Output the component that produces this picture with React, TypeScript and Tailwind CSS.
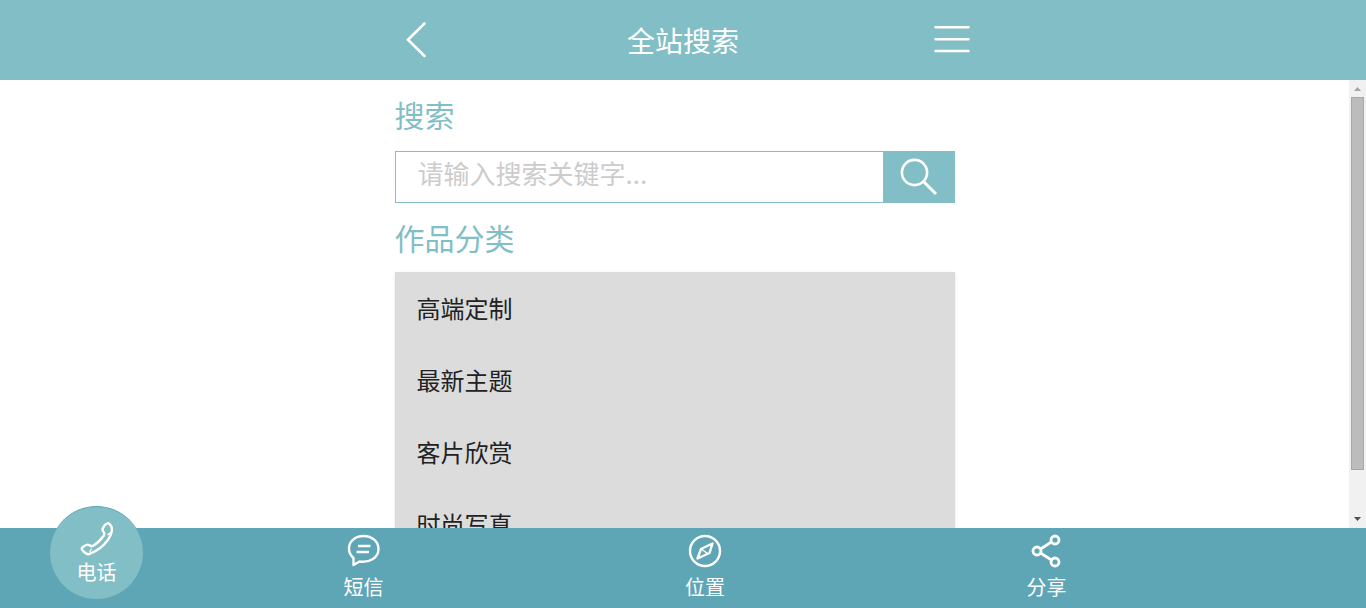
import { useState, type FormEvent } from "react";

const categories = ["高端定制", "最新主题", "客片欣赏", "时尚写真"];

function PhoneIcon() {
  return (
    <svg width="36" height="36" viewBox="0 0 36 36" fill="none" stroke="currentColor" strokeWidth="2.4" strokeLinejoin="round">
      <path d="M28 2.5 C29.500 1.800 31 3 32.500 6 C34 10 31.500 15 28.500 19.500 C24.500 25 17.500 30 11.500 32.500 C9 34 7.500 33 4.500 30.500 C2.500 28.500 2 27.500 4 26 C7 23.500 8.500 23 10 24 C11.500 25.300 12.500 25.500 14 24.800 C18 22.500 22 18.500 24.500 15 C25.800 13 25.500 12 24.300 10.500 C23 8.500 23.500 7.500 25.500 4.500 C26.300 3.300 27 2.900 28 2.500 Z" />
      <path d="M28.500 14 L31.500 11.500 M12.500 27.500 L10.500 31.500" strokeWidth="1.200" />
    </svg>
  );
}

function MessageIcon() {
  return (
    <svg width="36" height="36" viewBox="0 0 36 36" fill="none" stroke="currentColor" strokeWidth="2.4" strokeLinejoin="round" strokeLinecap="round">
      <path d="M7.500 26 V33 L13.500 29.500 C24 31 32.500 25.500 32.500 17 C32.500 9.500 26 4 17.500 4 C9 4 3 9.500 3 16.500 C3 20.500 4.500 23.500 7.500 26 Z" />
      <path d="M12 14 H24.500 M10.500 20 H23" strokeLinecap="butt" />
    </svg>
  );
}

function CompassIcon() {
  return (
    <svg width="36" height="36" viewBox="0 0 36 36" fill="none" stroke="currentColor" strokeWidth="2.400" strokeLinejoin="round">
      <circle cx="18" cy="19" r="15" />
      <path d="M25.500 11.500 L22.500 21 L10.500 26.500 L14 17 Z" />
      <path d="M15 17.500 L20.500 21.500" strokeWidth="1.500" />
    </svg>
  );
}

function ShareIcon() {
  return (
    <svg width="36" height="36" viewBox="0 0 36 36" fill="none" stroke="currentColor" strokeWidth="2.800">
      <circle cx="8" cy="19" r="4" />
      <circle cx="26" cy="8" r="4" />
      <circle cx="26" cy="30" r="4" />
      <path d="M11.500 17 L22.500 10 M11.500 21 L22.500 28" />
    </svg>
  );
}

function Header() {
  return (
    <header className="h-20 shrink-0 bg-[#82bec5] text-white">
      <div className="mx-auto flex h-full max-w-[600px] items-center justify-between">
        <button type="button" aria-label="返回" className="flex h-20 w-16 items-center justify-center">
          <svg width="24" height="40" viewBox="0 0 24 40" fill="none" stroke="currentColor" strokeWidth="2.600" strokeLinecap="round">
            <path d="M21.500 3.500 L5 19.700 L21.500 36" />
          </svg>
        </button>
        <h1 className="text-[28px] leading-10">全站搜索</h1>
        <button type="button" aria-label="菜单" className="flex h-20 w-16 items-center justify-center">
          <svg width="38" height="28" viewBox="0 0 38 28" fill="none" stroke="currentColor" strokeWidth="2.400" strokeLinecap="round">
            <path d="M3.500 1.300 H36.500 M3.500 13.200 H36.500 M3.500 25 H36.500" />
          </svg>
        </button>
      </div>
    </header>
  );
}

function SearchForm() {
  const [keyword, setKeyword] = useState("");
  const handleSubmit = (e: FormEvent) => {
    e.preventDefault();
  };

  return (
    <form onSubmit={handleSubmit} className="flex h-[52px] border border-[#82bec5]">
      <input
        type="text"
        aria-label="搜索"
        placeholder="请输入搜索关键字..."
        value={keyword}
        onChange={(e) => setKeyword(e.target.value)}
        className="min-w-0 flex-1 bg-white px-[22px] pb-[10px] text-[26px] text-[#222] outline-none placeholder:text-[#ccc]"
      />
      <button type="submit" aria-label="提交" className="flex w-[71px] items-center justify-center bg-[#82bec5] text-white">
        <svg width="40" height="40" viewBox="0 0 40 40" fill="none" stroke="currentColor" strokeWidth="2.600">
          <circle cx="16.500" cy="15.500" r="12.600" />
          <path d="M25.500 24.500 L38 37" strokeWidth="3" />
        </svg>
      </button>
    </form>
  );
}

function ScrollRail() {
  return (
    <div className="flex w-[17px] shrink-0 flex-col items-center bg-[#f1f1f1]">
      <svg width="17" height="17" viewBox="0 0 17 17" fill="#a3a3a3">
        <path d="M5 11 L8.500 7 L12 11 Z" />
      </svg>
      <div className="flex w-full flex-1 flex-col items-center">
        <div className="h-9/10 w-[13px] border border-[#a8a8a8] bg-[#bcbcbc]" />
      </div>
      <svg width="17" height="17" viewBox="0 0 17 17" fill="#505050">
        <path d="M5 6 L8.500 10 L12 6 Z" />
      </svg>
    </div>
  );
}

function Footer() {
  const linkClass = "flex w-11 flex-col items-center gap-1 pt-1";
  const labelClass = "text-[20px] leading-[30px] whitespace-nowrap";
  return (
    <footer className="relative h-20 shrink-0 bg-[#5ea5b6] text-white">
      <ul className="grid h-full grid-cols-4">
        <li>
          <a
            href="#tel"
            className="absolute -top-[22px] left-[50px] flex size-[93px] flex-col items-center rounded-full border-t border-[#5ea5b6] bg-[#82bec5] pt-[14px]"
          >
            <PhoneIcon />
            <span className={labelClass}>电话</span>
          </a>
        </li>
        <li>
          <a href="#sms" className={linkClass}>
            <MessageIcon />
            <span className={labelClass}>短信</span>
          </a>
        </li>
        <li>
          <a href="#map" className={linkClass}>
            <CompassIcon />
            <span className={labelClass}>位置</span>
          </a>
        </li>
        <li>
          <a href="#share" className={linkClass}>
            <ShareIcon />
            <span className={labelClass}>分享</span>
          </a>
        </li>
      </ul>
    </footer>
  );
}

export default function App() {
  return (
    <div className="flex h-screen flex-col bg-white font-['Noto_Sans_CJK_SC',sans-serif]">
      <Header />
      <div className="flex min-h-0 flex-1">
        <main className="flex-1 overflow-y-auto [scrollbar-width:none]">
          <div className="mx-auto max-w-[560px] pb-[18px]">
            <h2 className="pt-[10px] pb-[13px] text-[30px] leading-[48px] text-[#82bec5]">搜索</h2>
            <SearchForm />
            <h2 className="pt-[10px] pb-[11px] text-[30px] leading-[48px] text-[#82bec5]">作品分类</h2>
            <ul className="bg-[#dcdcdc] shadow-sm">
              {categories.map((name) => (
                <li key={name}>
                  <a href="#list" className="block px-[22px] text-[24px] leading-[72px] text-[#222]">
                    {name}
                  </a>
                </li>
              ))}
            </ul>
          </div>
        </main>
        <ScrollRail />
      </div>
      <Footer />
    </div>
  );
}
